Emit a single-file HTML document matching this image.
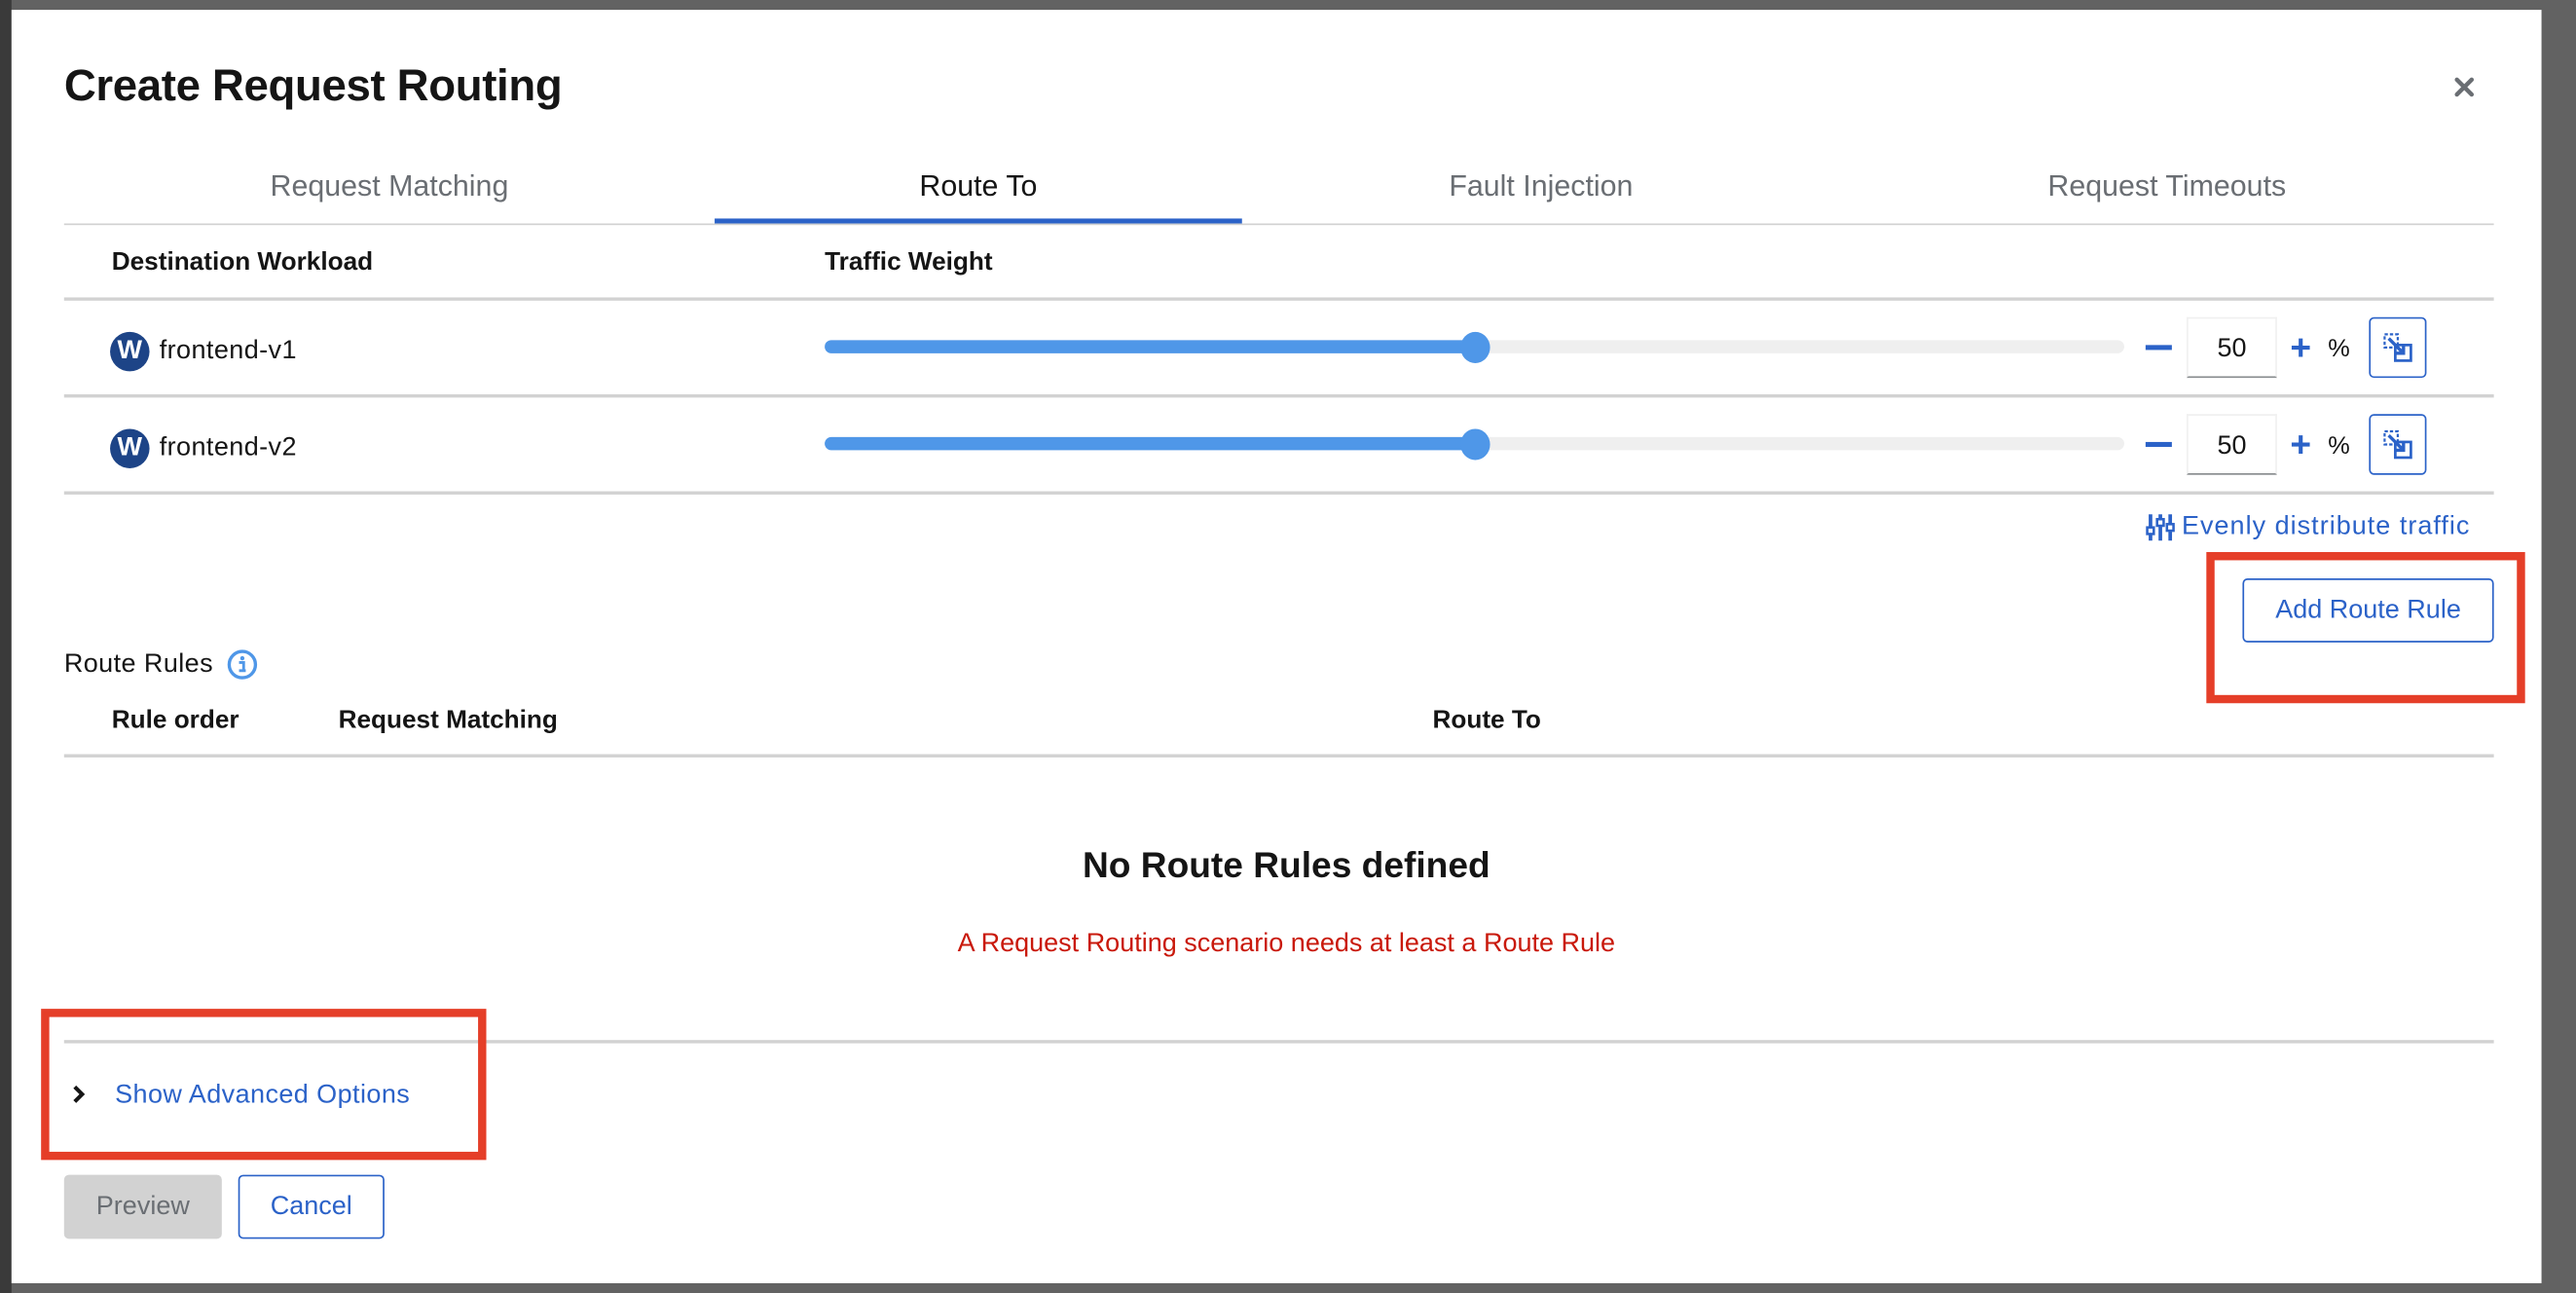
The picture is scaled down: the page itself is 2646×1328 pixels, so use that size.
<!DOCTYPE html>
<html><head><meta charset="utf-8"><style>
html,body{margin:0;padding:0;width:2646px;height:1328px;overflow:hidden;background:#626262;}
#s{position:absolute;left:0;top:0;width:1568px;height:787px;transform:scale(1.6875);transform-origin:0 0;font-family:"Liberation Sans",sans-serif;color:#151515;}
.a{position:absolute;white-space:nowrap;}
.line{position:absolute;height:1px;background:#d2d2d2;}
.b{font-weight:bold;font-size:15.5px;}
.blue{color:#2b62c8;}
.t{font-size:16px;letter-spacing:0.25px;}
</style></head><body><div id="s">
<div class="a" style="left:0;top:0;width:7px;height:787px;background:#3a3a3a"></div>
<div class="a" style="left:7px;top:6px;width:1540px;height:775px;background:#fff"></div>
<div class="a" style="left:39px;top:37px;font-size:27px;font-weight:bold;letter-spacing:-0.2px">Create Request Routing</div>
<svg class="a" style="left:1494px;top:47px" width="12" height="12" viewBox="0 0 12 12"><path d="M1.5 1.5L10.5 10.5M10.5 1.5L1.5 10.5" stroke="#6a6e73" stroke-width="2.6" stroke-linecap="round"/></svg>

<div class="a" style="left:39px;top:103px;width:396px;text-align:center;font-size:18px;color:#6a6e73">Request Matching</div>
<div class="a" style="left:435px;top:103px;width:321px;text-align:center;font-size:18px;color:#151515">Route To</div>
<div class="a" style="left:756px;top:103px;width:364px;text-align:center;font-size:18px;color:#6a6e73">Fault Injection</div>
<div class="a" style="left:1120px;top:103px;width:398px;text-align:center;font-size:18px;color:#6a6e73">Request Timeouts</div>
<div class="line" style="left:39px;top:136px;width:1479px"></div>
<div class="a" style="left:435px;top:133px;width:321px;height:3px;background:#2b62c8"></div>

<div class="a b" style="left:68px;top:151px">Destination Workload</div>
<div class="a b" style="left:502px;top:151px">Traffic Weight</div>
<div class="line" style="left:39px;top:181px;width:1479px;height:2px"></div>

<!-- row 1 -->
<div class="a" style="left:67px;top:202px;width:24px;height:24px;border-radius:50%;background:#1d4487;color:#fff;font-weight:bold;font-size:16px;line-height:24px;text-align:center">W</div>
<div class="a t" style="left:97px;top:205px">frontend-v1</div>
<div class="a" style="left:502px;top:207px;width:791px;height:8px;border-radius:4px;background:#efefef"></div>
<div class="a" style="left:502px;top:207px;width:396px;height:8px;border-radius:4px 0 0 4px;background:#4f97e8"></div>
<div class="a" style="left:889px;top:202px;width:18px;height:19px;border-radius:50%;background:#4f97e8"></div>
<div class="a" style="left:1306px;top:210px;width:16px;height:3px;background:#2b62c8"></div>
<div class="a" style="left:1331px;top:193px;width:55px;height:37px;border:1px solid #f0f0f0;border-bottom:1px solid #8a8d90;box-sizing:border-box;font-size:16px;text-align:center;line-height:37px">50</div>
<div class="a blue" style="left:1394px;top:201px;font-size:22px;font-weight:bold;line-height:22px">+</div>
<div class="a" style="left:1417px;top:204px;font-size:15px">%</div>
<div class="a" style="left:1442px;top:193px;width:35px;height:37px;border:1px solid #2b62c8;border-radius:3px;box-sizing:border-box"></div>
<svg class="a" style="left:1450px;top:202px" width="20" height="20" viewBox="0 0 20 20"><rect x="1.5" y="1.5" width="8" height="8" fill="none" stroke="#2b62c8" stroke-width="1.3" stroke-dasharray="2 1.2"/><rect x="8" y="8" width="9.5" height="9.5" fill="none" stroke="#2b62c8" stroke-width="1.6"/><path d="M4 4L13 13M13 8.5V13H8.5" stroke="#2b62c8" stroke-width="2" fill="none"/></svg>
<div class="line" style="left:39px;top:240px;width:1479px;height:2px"></div>

<!-- row 2 -->
<div class="a" style="left:67px;top:261px;width:24px;height:24px;border-radius:50%;background:#1d4487;color:#fff;font-weight:bold;font-size:16px;line-height:24px;text-align:center">W</div>
<div class="a t" style="left:97px;top:264px">frontend-v2</div>
<div class="a" style="left:502px;top:266px;width:791px;height:8px;border-radius:4px;background:#efefef"></div>
<div class="a" style="left:502px;top:266px;width:396px;height:8px;border-radius:4px 0 0 4px;background:#4f97e8"></div>
<div class="a" style="left:889px;top:261px;width:18px;height:19px;border-radius:50%;background:#4f97e8"></div>
<div class="a" style="left:1306px;top:269px;width:16px;height:3px;background:#2b62c8"></div>
<div class="a" style="left:1331px;top:252px;width:55px;height:37px;border:1px solid #f0f0f0;border-bottom:1px solid #8a8d90;box-sizing:border-box;font-size:16px;text-align:center;line-height:37px">50</div>
<div class="a blue" style="left:1394px;top:260px;font-size:22px;font-weight:bold;line-height:22px">+</div>
<div class="a" style="left:1417px;top:263px;font-size:15px">%</div>
<div class="a" style="left:1442px;top:252px;width:35px;height:37px;border:1px solid #2b62c8;border-radius:3px;box-sizing:border-box"></div>
<svg class="a" style="left:1450px;top:261px" width="20" height="20" viewBox="0 0 20 20"><rect x="1.5" y="1.5" width="8" height="8" fill="none" stroke="#2b62c8" stroke-width="1.3" stroke-dasharray="2 1.2"/><rect x="8" y="8" width="9.5" height="9.5" fill="none" stroke="#2b62c8" stroke-width="1.6"/><path d="M4 4L13 13M13 8.5V13H8.5" stroke="#2b62c8" stroke-width="2" fill="none"/></svg>
<div class="line" style="left:39px;top:299px;width:1479px;height:2px"></div>

<svg class="a" style="left:1306px;top:312px" width="18" height="18" viewBox="0 0 18 18"><g stroke="#2b62c8" stroke-width="2.2"><path d="M3 1V17M9 1V17M15 1V17"/></g><g fill="#fff" stroke="#2b62c8" stroke-width="1.5"><rect x="1" y="9" width="4" height="4"/><rect x="7" y="4" width="4" height="4"/><rect x="13" y="7" width="4" height="4"/></g></svg>
<div class="a blue t" style="left:1328px;top:312px;letter-spacing:0.6px">Evenly distribute traffic</div>

<div class="a" style="left:1343px;top:336px;width:194px;height:92px;border:5px solid #e53e28;box-sizing:border-box"></div>
<div class="a blue" style="left:1365px;top:352px;width:153px;height:39px;border:1px solid #2b62c8;border-radius:3px;box-sizing:border-box;font-size:16px;text-align:center;line-height:38px">Add Route Rule</div>

<div class="a t" style="left:39px;top:396px">Route Rules</div>
<svg class="a" style="left:138px;top:395px" width="19" height="19" viewBox="0 0 19 19"><circle cx="9.5" cy="9.5" r="8" fill="none" stroke="#4f97e8" stroke-width="2"/><circle cx="9.5" cy="5.6" r="1.3" fill="#4f97e8"/><path d="M7.5 8.2H10.3V13.2H11.6M7.5 13.2H11.6" stroke="#4f97e8" stroke-width="1.7" fill="none"/></svg>
<div class="a b" style="left:68px;top:430px">Rule order</div>
<div class="a b" style="left:206px;top:430px">Request Matching</div>
<div class="a b" style="left:872px;top:430px">Route To</div>
<div class="line" style="left:39px;top:459px;width:1479px;height:2px"></div>

<div class="a" style="left:0;top:514px;width:1566px;text-align:center;font-size:22px;font-weight:bold">No Route Rules defined</div>
<div class="a" style="left:0;top:566px;width:1566px;text-align:center;font-size:16px;color:#c9190b">A Request Routing scenario needs at least a Route Rule</div>

<div class="line" style="left:39px;top:633px;width:1479px;height:2px"></div>
<div class="a" style="left:25px;top:614px;width:271px;height:92px;border:5px solid #e53e28;box-sizing:border-box"></div>
<svg class="a" style="left:43px;top:660px" width="10" height="12" viewBox="0 0 10 12"><path d="M2.5 1.5L7 6L2.5 10.5" stroke="#151515" stroke-width="2.4" fill="none"/></svg>
<div class="a blue t" style="left:70px;top:658px">Show Advanced Options</div>

<div class="a" style="left:39px;top:715px;width:96px;height:39px;background:#d2d2d2;border-radius:3px;color:#6a6e73;font-size:16px;text-align:center;line-height:39px">Preview</div>
<div class="a blue" style="left:145px;top:715px;width:89px;height:39px;border:1px solid #2b62c8;border-radius:3px;box-sizing:border-box;font-size:16px;text-align:center;line-height:38px">Cancel</div>
</div></body></html>
